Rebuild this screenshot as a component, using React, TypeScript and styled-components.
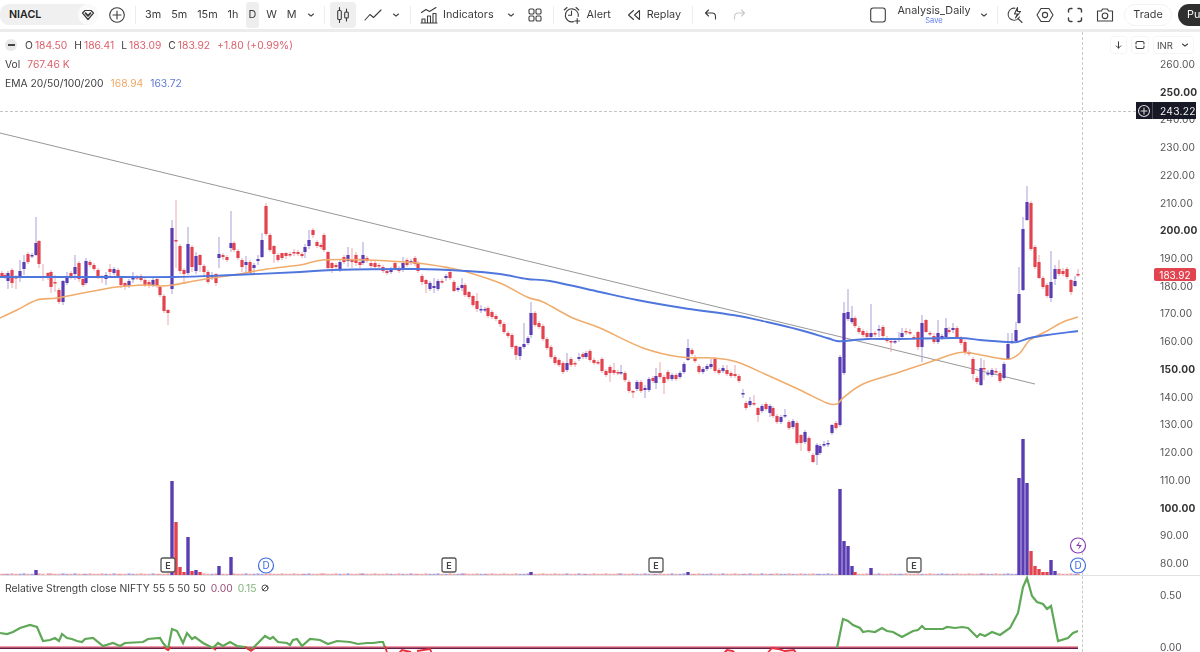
import React from 'react';
import styled, { createGlobalStyle } from 'styled-components';

const GlobalStyle = createGlobalStyle`
  html, body {
    margin: 0;
    padding: 0;
    background: #fff;
    overflow: hidden;
  }
  body {
    font-family: Inter, "Liberation Sans", sans-serif;
    color: #3a3a3a;
  }
`;

const Page = styled.div`
  width: 1200px;
  height: 652px;
  display: flex;
  flex-direction: column;
  overflow: hidden;
  filter: blur(0.4px);
`;

const Toolbar = styled.header`
  height: 29px;
  flex: none;
  display: flex;
  align-items: center;
  border-bottom: 3px solid #ececec;
  overflow: hidden;
  font-size: 10.8px;
`;

const SymbolPill = styled.div`
  width: 98px;
  height: 21px;
  flex: none;
  display: flex;
  align-items: center;
  justify-content: space-between;
  padding-left: 9px;
  box-sizing: border-box;
  border-radius: 10px 12px 12px 10px;
  background: #f0f0f0;
  font-size: 10.7px;
  font-weight: 600;
  color: #222;
`;

const DiamondBadge = styled.span`
  width: 20px;
  height: 21px;
  display: flex;
  align-items: center;
  justify-content: center;
  border-radius: 50%;
  background: #fafafa;
`;

const IconSlot = styled.span<{ $ml?: number; $w?: number }>`
  flex: none;
  width: ${p => p.$w ?? 18}px;
  height: 22px;
  margin-left: ${p => p.$ml ?? 0}px;
  display: flex;
  align-items: center;
  justify-content: center;
`;

const Divider = styled.span<{ $ml: number }>`
  flex: none;
  width: 1px;
  height: 18px;
  margin-left: ${p => p.$ml}px;
  background: #ededed;
`;

const Intervals = styled.div`
  display: flex;
  align-items: center;
  gap: 5px;
  margin-left: 6.5px;
`;

const IntervalBtn = styled.span<{ $active?: boolean }>`
  height: 26px;
  padding: 0 2.5px;
  display: flex;
  align-items: center;
  border-radius: 3px;
  background: ${p => (p.$active ? '#eeeeee' : 'transparent')};
`;

const ChartTypeBtn = styled.span`
  flex: none;
  width: 26px;
  height: 26px;
  margin-left: 5px;
  display: flex;
  align-items: center;
  justify-content: center;
  border-radius: 4px;
  background: #efefef;
`;

const BarLabel = styled.span<{ $ml: number }>`
  flex: none;
  margin-left: ${p => p.$ml}px;
`;

const RightGroup = styled.div`
  margin-left: auto;
  flex: none;
  display: flex;
  align-items: center;
`;

const LayoutName = styled.div`
  width: 74px;
  margin-left: 11px;
  padding-top: 1px;
  display: flex;
  flex-direction: column;
  align-items: center;
  line-height: 12px;
  font-size: 10.8px;
`;

const SaveHint = styled.span`
  font-size: 7.5px;
  line-height: 8px;
  color: #5f7fe8;
`;

const TradePill = styled.span`
  width: 48px;
  height: 22px;
  margin-left: 10px;
  display: flex;
  align-items: center;
  justify-content: center;
  box-sizing: border-box;
  border: 1px solid #f3f3f3;
  border-radius: 12px;
`;

const PublishPill = styled.span`
  width: 22px;
  height: 22px;
  margin-left: 6px;
  padding-left: 9px;
  box-sizing: border-box;
  display: flex;
  align-items: center;
  overflow: hidden;
  white-space: nowrap;
  border-radius: 12px 0 0 12px;
  background: #2f2f2f;
  color: #fff;
`;

const PriceRow = styled.section`
  position: relative;
  height: 543px;
  flex: none;
  display: flex;
  border-bottom: 1px solid #e2e2e2;
`;

const RsiRow = styled.section`
  position: relative;
  flex: 1;
  display: flex;
  min-height: 0;
`;

const ChartArea = styled.div`
  position: relative;
  width: 1082px;
  flex: none;
  border-right: 1px dashed #c9c9c9;
  svg {
    display: block;
    overflow: visible;
  }
`;

const Axis = styled.aside`
  flex: 1;
  display: flex;
  flex-direction: column;
  font-size: 10.2px;
  color: #4a4a4a;
`;

const AxisControls = styled.div`
  display: flex;
  align-items: center;
  gap: 4px;
  height: 18px;
  margin: 4px 0 -4px 27px;
`;

const AxisButton = styled.span<{ $w: number }>`
  width: ${p => p.$w}px;
  height: 18px;
  display: flex;
  align-items: center;
  justify-content: space-between;
  box-sizing: border-box;
  padding: 0 3px;
  border: 1px solid #f5f5f5;
  border-radius: 3px;
  font-size: 9.5px;
`;

const TickRow = styled.div<{ $strong?: boolean }>`
  height: 27.74px;
  flex: none;
  padding-left: 77px;
  display: flex;
  align-items: center;
  font-weight: ${p => (p.$strong ? 700 : 400)};
  color: ${p => (p.$strong ? '#333' : '#555')};
  letter-spacing: 0.15px;
`;

const RsiTicks = styled.div`
  height: 78px;
  padding: 14px 0 0 77px;
  box-sizing: border-box;
  display: flex;
  flex-direction: column;
  justify-content: space-between;
  line-height: 10px;
  color: #555;
`;

const Legend = styled.div`
  position: absolute;
  left: 5px;
  top: 4px;
  display: flex;
  flex-direction: column;
  font-size: 10.3px;
  color: #3f3f3f;
`;

const LegendRow = styled.div<{ $gap?: number }>`
  height: 18.8px;
  display: flex;
  align-items: center;
  gap: ${p => p.$gap ?? 7}px;
  white-space: nowrap;
`;

const CollapseBtn = styled.span`
  width: 12px;
  height: 12px;
  margin-right: 1px;
  border-radius: 50%;
  background: #e9e9e9;
  display: flex;
  align-items: center;
  justify-content: center;
  &::after {
    content: '';
    width: 7px;
    height: 2px;
    background: #444;
  }
`;

const Ohlc = styled.span`
  display: inline-flex;
  gap: 2px;
`;

const Val = styled.span<{ $c: string }>`
  color: ${p => p.$c};
`;

const RsiLegend = styled(Legend)`
  top: 4px;
  height: 16px;
`;

const CrossLine = styled.div`
  position: absolute;
  left: 0;
  right: 64px;
  top: 79px;
  border-top: 1px dashed #c4c4c4;
`;

const CrossTag = styled.div`
  position: absolute;
  left: 1136px;
  top: 70px;
  width: 60px;
  height: 17px;
  display: flex;
  align-items: center;
  background: #171a26;
  color: #f2f2f2;
  font-size: 10.2px;
  letter-spacing: 0.3px;
`;

const CrossPlus = styled.span`
  width: 16px;
  height: 17px;
  flex: none;
  display: flex;
  align-items: center;
  justify-content: center;
  border-right: 1px solid #4a4d58;
`;

const CrossPrice = styled.span`
  padding-left: 7px;
`;

const LastPriceTag = styled.div`
  position: absolute;
  left: 1154px;
  top: 236px;
  width: 42px;
  height: 13px;
  display: flex;
  align-items: center;
  justify-content: center;
  background: #e2444f;
  color: #fff;
  font-size: 10px;
  border-radius: 2px;
`;

const UP = '#5a3db3';
const DOWN = '#e2434f';
const UP_WICK = '#a99fd8';
const DOWN_WICK = '#eba9ae';

// c x top bottom wickTop wickBottom (page pixels)
const CANDLE_DATA = `r2 273 276|r5 275 277|p8 273 281 271 289|r12 270 283 268 288|r16 277 278 275 289|p20 271 277 260 282|p24 262 269 255 275|r28 254 262|p32 255 256|p36 243 255 217 256|r39 241 264 240 268|r43 276 277 264 281|r48 273 277 272 280|r51 272 287 270 293|r55 282 283 275 292|r59 290 302 288 304|p63 281 302 280 305|p67 278 283 272 285|r71 273 277 271 279|p75 267 274 255 280|r79 263 279 261 282|r83 279 285 278 287|p86 261 283 258 285|r90 262 265|r94 265 269|r98 270 277|r102 276 278 275 283|p106 275 279 272 285|r110 269 272 264 276|p114 269 273|r118 270 276|r121 277 285 276 288|r125 283 286 282 290|p129 281 286|p133 278 279 272 283|r137 277 278|r141 276 280|r145 280 285|r149 282 285 280 288|p153 280 285|r157 279 286|r160 287 295|r164 296 311|r168 310 313 309 325|p172 228 289 220 294|r176 240 241 200 268|r180 246 271 244 274|r184 270 274 268 284|p188 244 273 227 275|r192 247 267 245 272|p196 256 271 252 274|r200 255 265 254 272|r204 266 272 264 276|r208 272 282|p212 276 277 272 280|r216 274 283 273 286|p219 254 258 237 268|r223 255 257 253 260|r227 257 260|p231 243 248 211 252|r234 243 250|r238 251 258|r242 260 267 258 272|p246 262 265 256 275|r250 262 273 260 275|p254 265 268 263 274|p258 259 261 255 265|p262 240 257 233 258|r266 206 234 203 236|r270 235 250|r274 246 254 245 263|r278 255 260|r282 253 258 253 260|r286 253 256 252 259|r290 254 255|r294 252 253 249 256|r298 252 254|r302 254 256|p305 247 252 244 258|p309 240 246 230 249|r313 230 235 228 238|r317 242 246|r321 245 247|r324 235 250|r328 252 268 251 270|r332 263 268 262 273|r336 265 267|p340 262 270|r344 257 262 255 264|p348 255 261 247 267|r352 260 262 248 268|r356 255 263 252 266|r360 262 265 258 268|p363 255 263 242 265|r367 258 261 256 263|r371 263 266|r375 263 267|r379 265 266|r383 267 271|r387 271 273|p391 269 272|r395 263 268|r399 268 271|p403 263 270 257 272|r407 260 265 258 267|p411 261 263|r415 258 264 256 266|r418 263 271|r422 276 282 274 285|r426 280 284 279 293|p430 283 289|p434 286 288 278 293|p438 281 289|r442 281 282|p446 276 278 274 281|r450 272 278 270 280|r454 282 291 280 292|p458 288 290|p462 285 288 278 291|r465 285 295|r469 292 297 291 299|r473 296 305 295 307|r477 301 309 293 312|p481 309 310 305 313|p485 309 310 307 312|r488 308 316 306 318|r492 312 317|r496 316 319|r500 320 324 319 327|r504 324 332|r508 333 336|r512 335 347|r516 346 355 345 360|p520 347 356 346 360|p524 344 347 323 349|p528 338 343|p531 313 335 302 338|r535 313 325|r539 323 327|r543 326 339|r547 339 348|r551 347 357|r555 357 363|r559 360 365|r563 363 372|p567 363 370 353 372|r571 359 365|r575 363 364 361 367|p579 357 359 353 361|r583 354 357|p586 353 357|r590 351 360|r594 360 363|r598 362 363|r602 359 371|r606 371 375|r610 367 373 365 382|r614 370 373 363 375|r618 372 373|p621 372 373 365 375|r625 373 380|r629 382 391|r633 391 392 390 398|p637 382 389|r641 382 391|p645 388 390 385 398|p649 379 390|r653 378 381|p656 376 383 368 389|r660 373 377 362 379|r664 377 383 375 394|r668 372 379|p672 375 379|r676 375 379|p680 373 377|p684 364 372|p688 348 360 339 361|r692 350 354|r695 357 361|r699 366 372|p703 369 372|p707 366 369|p711 364 367 359 369|r715 359 371|r719 370 373|p723 368 371 365 373|r727 370 374 365 376|r731 373 376|r735 374 376 365 378|r739 376 381|p743 393 394 389 398|r746 403 408|p750 401 405 397 407|r754 403 404 395 406|r758 408 415 407 422|p762 406 411|r766 404 409|p770 406 413 404 417|r773 408 416|r777 416 422|p781 417 422|p785 415 416 409 418|r789 422 428|p793 421 427|r797 423 443|r801 435 443 434 451|p805 432 442|r809 438 451|r813 455 462 453 463|p817 445 455 443 465|p820 446 453|p824 444 445 441 447|p828 443 444 440 447|p832 425 433 424 435|r836 423 428|p840 357 425|p844 313 373 302 375|p848 312 319 289 321|p852 318 322 306 324|r855 318 326 316 328|r859 328 332|r863 331 335|r867 333 337|p871 333 337 304 339|r875 333 334 331 337|p879 329 330 325 337|r883 327 336|r887 338 341|r891 341 342 338 352|p895 341 342 338 344|p899 338 339 332 342|p902 333 337 328 339|r906 331 332 328 335|r910 332 333 329 335|r914 337 338|r918 332 347 331 350|p922 323 347 315 362|r926 320 332 319 333|r930 333 334|r934 336 342 333 344|p938 333 342 320 344|p942 336 338|p946 328 337 318 338|r949 330 332 327 334|p953 328 330 323 333|r957 328 337|r961 338 343|r965 342 353|r969 352 354|r973 359 374 357 380|r977 378 382 376 384|p981 368 385 358 386|r984 368 369 360 380|p988 373 374 370 376|p992 370 375 368 377|r996 371 372 368 374|r1000 373 381 371 383|p1004 364 378|p1008 344 359 333 360|p1012 341 342 333 344|p1016 330 341 322 342|p1019 294 323 267 324|p1023 229 290 217 291|p1027 202 220 186 221|r1031 203 249|r1035 247 267|r1039 262 278 255 279|r1043 278 287|r1047 285 296|p1051 282 298 251 302|p1055 269 279 265 285|r1059 269 274 260 276|r1063 271 274 268 276|r1067 269 277|r1071 280 292 279 295|p1075 281 286 276 287|r1078 274 275 269 277`;

type Candle = { x: number; t: number; b: number; wt: number; wb: number; up: boolean };

const candles: Candle[] = CANDLE_DATA.split('|').map(s => {
  const n = s.slice(1).split(' ').map(Number);
  return { x: n[0], t: n[1], b: n[2], wt: n[3] ?? n[1] - 2, wb: n[4] ?? n[2] + 2, up: s[0] === 'p' };
});

// volume bars that stand out, [x, top y]
const BIG_VOLUME: Record<number, number> = {
  36: 570, 172: 481, 176: 522, 180: 567, 184: 572, 188: 537, 192: 571, 196: 570, 200: 572,
  219: 566, 231: 557, 531: 572, 688: 572, 840: 489, 844: 541, 848: 546, 852: 566, 855: 572,
  871: 568, 1019: 478, 1023: 439, 1027: 483, 1031: 551, 1035: 566, 1039: 569, 1043: 572,
  1047: 572, 1051: 560, 1055: 571,
};

const EMA_BLUE = '0,277 43,277 100,277 173,277 233,275 300,272 333,270 417,269 467,271 500,274 527,279 550,281 600,292 637,300 683,308 733,315 767,322 800,330 827,338 837,341 845,341 867,339 897,339 957,338 980,340 1007,342 1017,342 1030,338 1047,335 1078,331';
const EMA_ORANGE = '0,318 17,310 37,300 57,298 83,293 117,287 147,285 160,286 173,285 200,280 233,275 267,269 300,265 323,260 367,260 417,263 450,268 467,272 500,283 527,297 543,302 573,318 600,328 643,348 680,357 713,358 737,362 767,375 800,390 827,403 837,404 843,398 863,384 897,373 930,362 957,353 970,353 997,358 1010,359 1020,353 1030,340 1047,331 1063,322 1078,317';
const RSI_LEFT = '0,633 7,634 13,632 20,628 30,625 37,627 43,641 50,640 55,638 59,641 62,634 67,638 72,639 77,641 82,642 85,639 93,638 103,646 113,643 120,646 125,643 143,642 148,639 160,638 163,643 168,649 172,629 177,631 183,643 187,633 192,639 195,637 203,643 213,648 218,643 223,646 230,642 237,646 245,647 251,650 257,644 265,636 270,639 273,637 278,642 287,643 290,645 293,640 297,639 302,646 310,639 320,640 328,644 337,641 350,642 358,644 367,643 373,643 380,642 383,642 385,648';
const RSI_RIGHT = '837,648 843,619 848,621 853,625 860,628 863,632 868,631 875,632 882,628 887,631 893,632 902,637 913,631 918,630 922,626 925,629 943,629 947,627 955,628 962,627 968,628 977,637 980,634 985,636 992,632 1000,635 1010,628 1018,613 1023,587 1027,578 1032,596 1037,602 1043,604 1047,609 1051,606 1058,641 1068,638 1073,633 1078,631';
const RSI_BELOW = ['M163 647L168 650L171 647', 'M213 648L216 650', 'M245 647L251 651L255 648', 'M385 646L388 656', 'M396 656L402 650L411 652', 'M417 651L430 649L433 656', 'M721 656L727 650L733 651L737 656', 'M765 656L772 648L778 649L785 651L794 650L798 656'];

// catmull-rom through the read-off points, the averages are smooth curves
const smooth = (points: string) => {
  const p = points.split(' ').map(s => s.split(',').map(Number));
  let d = `M${p[0][0]} ${p[0][1]}`;
  for (let i = 0; i < p.length - 1; i++) {
    const a = p[Math.max(i - 1, 0)];
    const b = p[i];
    const c = p[i + 1];
    const e = p[Math.min(i + 2, p.length - 1)];
    const c1 = [b[0] + (c[0] - a[0]) / 6, b[1] + (c[1] - a[1]) / 6];
    const c2 = [c[0] - (e[0] - b[0]) / 6, c[1] - (e[1] - b[1]) / 6];
    d += `C${c1[0].toFixed(1)} ${c1[1].toFixed(1)} ${c2[0].toFixed(1)} ${c2[1].toFixed(1)} ${c[0]} ${c[1]}`;
  }
  return d;
};

const Ico = styled.svg<{ $s?: number; $stroke?: string }>`
  display: block;
  fill: none;
  stroke: ${p => p.$stroke ?? '#3c3c3c'};
  stroke-width: 1.1;
  stroke-linecap: round;
  stroke-linejoin: round;
  width: ${p => p.$s ?? 18}px;
  height: ${p => p.$s ?? 18}px;
`;

const Chevron = () => (
  <Ico viewBox="0 0 10 10" $s={10}>
    <path d="M2.5 4l2.5 2.2L7.5 4" />
  </Ico>
);

const EarningsMark = ({ x }: { x: number }) => (
  <g>
    <rect x={x - 7} y={558} width={14} height={14} rx={2} fill="#fff" stroke="#555" strokeWidth={1.3} />
    <text x={x} y={568.5} textAnchor="middle" fontSize={9} fontWeight={600} fill="#444" fontFamily="Inter, sans-serif">E</text>
  </g>
);

const DividendMark = ({ x }: { x: number }) => (
  <g>
    <circle cx={x} cy={565.5} r={7.5} fill="#fff" stroke="#3d6ee0" strokeWidth={1.2} />
    <text x={x} y={569.2} textAnchor="middle" fontSize={10} fill="#3d6ee0" fontFamily="Inter, sans-serif">D</text>
  </g>
);

const PriceChart = () => (
  <svg width={1082} height={543} viewBox="0 32 1082 543">
    <line x1={0} y1={133} x2={1035} y2={384} stroke="#8b8b8b" strokeWidth={0.9} />
    {candles.map(c => (
      <g key={c.x}>
        <line x1={c.x} x2={c.x} y1={c.wt} y2={c.wb} stroke={c.up ? UP_WICK : DOWN_WICK} strokeWidth={1} />
        <rect x={c.x - 1.6} y={c.t} width={3.2} height={Math.max(c.b - c.t, 1.5)} fill={c.up ? UP : DOWN} />
      </g>
    ))}
    <path d={smooth(EMA_ORANGE)} fill="none" stroke="#f0ac6c" strokeWidth={1.6} />
    <path d={smooth(EMA_BLUE)} fill="none" stroke="#4f76dd" strokeWidth={1.9} />
    {candles.map(c => {
      const top = BIG_VOLUME[c.x] ?? 574 - (c.x % 3 === 0 ? 0.6 : 0.2);
      const big = BIG_VOLUME[c.x] !== undefined;
      return (
        <rect
          key={c.x}
          x={c.x - 1.7}
          y={top}
          width={3.4}
          height={575 - top}
          fill={c.up ? UP : DOWN}
          opacity={big ? 1 : 0.5}
        />
      );
    })}
    {[168, 449, 656, 914].map(x => <EarningsMark key={x} x={x} />)}
    {[266, 1078].map(x => <DividendMark key={x} x={x} />)}
    <circle cx={1078} cy={545.5} r={7.5} fill="#fff" stroke="#8a3fb5" strokeWidth={1.2} />
    <path d="M1080 541l-4 5h3.5l-1.5 4 4-5h-3.5z" fill="#8a3fb5" />
  </svg>
);

const RsiChart = () => (
  <svg width={1082} height={76} viewBox="0 576 1082 76">
    <line x1={0} x2={1078} y1={647} y2={647} stroke="#ee3b52" strokeWidth={1} />
    <line x1={0} x2={1078} y1={648.2} y2={648.2} stroke="#6b1c48" strokeWidth={1.4} />
    <polyline points={RSI_LEFT} fill="none" stroke="#5fa857" strokeWidth={2.2} />
    <polyline points={RSI_RIGHT} fill="none" stroke="#5fa857" strokeWidth={2.2} />
    {RSI_BELOW.map(d => <path key={d} d={d} fill="none" stroke="#e8303f" strokeWidth={1.8} />)}
  </svg>
);

const PRICE_TICKS = [260, 250, 240, 230, 220, 210, 200, 190, 180, 170, 160, 150, 140, 130, 120, 110, 100, 90, 80];
const STRONG_TICKS = [250, 200, 150, 100];
const RED = '#dc5f6a';

export default function App() {
  return (
    <Page>
      <GlobalStyle />
      <Toolbar>
        <SymbolPill>
          NIACL
          <DiamondBadge>
            <Ico viewBox="0 0 14 14" $s={14}>
              <path d="M1.5 5L4 2.5h6L12.5 5 7 11.5z" strokeWidth={1.2} />
              <path d="M4.5 5.2L7 7.8l2.5-2.6" strokeWidth={1.8} />
            </Ico>
          </DiamondBadge>
        </SymbolPill>
        <IconSlot $ml={10}>
          <Ico viewBox="0 0 18 18">
            <circle cx={9} cy={9} r={7.3} />
            <path d="M9 5v8M5 9h8" />
          </Ico>
        </IconSlot>
        <Divider $ml={9} />
        <Intervals>
          <IntervalBtn>3m</IntervalBtn>
          <IntervalBtn>5m</IntervalBtn>
          <IntervalBtn>15m</IntervalBtn>
          <IntervalBtn>1h</IntervalBtn>
          <IntervalBtn $active>D</IntervalBtn>
          <IntervalBtn>W</IntervalBtn>
          <IntervalBtn>M</IntervalBtn>
        </Intervals>
        <IconSlot $ml={6} $w={12}><Chevron /></IconSlot>
        <Divider $ml={7} />
        <ChartTypeBtn>
          <Ico viewBox="0 0 18 18">
            <path d="M5.5 1.5v3M5.5 13.5v3M12.5 3v3M12.5 12v3" />
            <rect x={3.7} y={4.5} width={3.6} height={9} rx={1} />
            <rect x={10.7} y={6} width={3.6} height={6} rx={1} />
          </Ico>
        </ChartTypeBtn>
        <IconSlot $ml={8}>
          <Ico viewBox="0 0 18 18">
            <path d="M1 14l5-5.5 3.5 3L17 4" />
          </Ico>
        </IconSlot>
        <IconSlot $ml={8} $w={12}><Chevron /></IconSlot>
        <Divider $ml={8} />
        <IconSlot $ml={9}>
          <Ico viewBox="0 0 18 18">
            <path d="M1.5 6.5L6 3.5l3.5 2L16 1.5" />
            <path d="M2 17v-4h3v4zM7.5 17V10h3v7zM13 17V7.5h3V17zM1 17h16" />
          </Ico>
        </IconSlot>
        <BarLabel $ml={5}>Indicators</BarLabel>
        <IconSlot $ml={11} $w={12}><Chevron /></IconSlot>
        <IconSlot $ml={11} $w={14}>
          <Ico viewBox="0 0 14 14" $s={14}>
            <rect x={1} y={1} width={5} height={5} rx={1.3} />
            <rect x={8} y={1} width={5} height={5} rx={1.3} />
            <rect x={1} y={8} width={5} height={5} rx={1.3} />
            <rect x={8} y={8} width={5} height={5} rx={1.3} />
          </Ico>
        </IconSlot>
        <Divider $ml={11} />
        <IconSlot $ml={9}>
          <Ico viewBox="0 0 18 18">
            <path d="M10.5 15.6A6.5 6.5 0 1 1 15.2 10.5" />
            <path d="M8.5 5v4.3h-3M1.2 4L4 1.5M15.8 4L13 1.5M14.2 12.5v5M11.7 15h5" />
          </Ico>
        </IconSlot>
        <BarLabel $ml={6}>Alert</BarLabel>
        <IconSlot $ml={16} $w={14}>
          <Ico viewBox="0 0 14 14" $s={14}>
            <path d="M6.5 2.5L1.5 7l5 4.5M12.5 2.5L7.5 7l5 4.5z" />
          </Ico>
        </IconSlot>
        <BarLabel $ml={6}>Replay</BarLabel>
        <Divider $ml={11} />
        <IconSlot $ml={11} $w={13}>
          <Ico viewBox="0 0 13 13" $s={13}>
            <path d="M4.5 2L1.5 5l3 3M1.5 5H8a3.5 3.5 0 0 1 3.5 3.5V11" />
          </Ico>
        </IconSlot>
        <IconSlot $ml={16} $w={13}>
          <Ico viewBox="0 0 13 13" $s={13} $stroke="#c8c8c8">
            <path d="M8.5 2l3 3-3 3M11.5 5H5A3.5 3.5 0 0 0 1.5 8.5V11" />
          </Ico>
        </IconSlot>
        <RightGroup>
          <IconSlot $w={16}>
            <Ico viewBox="0 0 16 16" $s={16}>
              <rect x={0.7} y={1} width={14.6} height={14} rx={2.5} />
            </Ico>
          </IconSlot>
          <LayoutName>
            Analysis_Daily
            <SaveHint>Save</SaveHint>
          </LayoutName>
          <IconSlot $ml={7} $w={12}><Chevron /></IconSlot>
          <Divider $ml={7} />
          <IconSlot $ml={8} $w={18}>
            <Ico viewBox="0 0 18 18">
              <path d="M9 2.2A6 6 0 1 0 13.5 11" />
              <path d="M11.5 1.5L8.500 8h3L9.500 12l5-6.500h-3z" />
              <path d="M12 12.500l4 4" />
            </Ico>
          </IconSlot>
          <IconSlot $ml={12} $w={18}>
            <Ico viewBox="0 0 18 18">
              <path d="M5 2.500h8L17 9l-4 6.500H5L1 9z" />
              <circle cx={9} cy={9} r={2.600} />
            </Ico>
          </IconSlot>
          <IconSlot $ml={13} $w={16}>
            <Ico viewBox="0 0 16 16" $s={16}>
              <path d="M1.500 5V3.500a2 2 0 0 1 2-2H5M11 1.500h1.500a2 2 0 0 1 2 2V5M14.500 11v1.500a2 2 0 0 1-2 2H11M5 14.500H3.500a2 2 0 0 1-2-2V11" strokeWidth={1.4} />
            </Ico>
          </IconSlot>
          <IconSlot $ml={13} $w={18}>
            <Ico viewBox="0 0 18 18">
              <path d="M1.500 5h4l1-2h5l1 2h4v10h-15z" />
              <circle cx={9} cy={9.800} r={2.800} />
            </Ico>
          </IconSlot>
          <TradePill>Trade</TradePill>
          <PublishPill>Publish</PublishPill>
        </RightGroup>
      </Toolbar>

      <PriceRow>
        <ChartArea>
          <PriceChart />
          <Legend>
            <LegendRow>
              <CollapseBtn />
              <Ohlc>O<Val $c={RED}>184.50</Val></Ohlc>
              <Ohlc>H<Val $c={RED}>186.41</Val></Ohlc>
              <Ohlc>L<Val $c={RED}>183.09</Val></Ohlc>
              <Ohlc>C<Val $c={RED}>183.92</Val></Ohlc>
              <Val $c={RED}>+1.80 (+0.99%)</Val>
            </LegendRow>
            <LegendRow>
              Vol <Val $c={RED}>767.46 K</Val>
            </LegendRow>
            <LegendRow>
              EMA 20/50/100/200 <Val $c="#efa866">168.94</Val> <Val $c="#5f78d8">163.72</Val>
            </LegendRow>
          </Legend>
        </ChartArea>
        <Axis>
          <AxisControls>
            <AxisButton $w={17}>
              <Ico viewBox="0 0 10 10" $s={10}>
                <path d="M5 1.500v7M2.500 6L5 8.500 7.500 6" />
              </Ico>
            </AxisButton>
            <AxisButton $w={18}>
              <Ico viewBox="0 0 10 10" $s={10}>
                <path d="M1 4V3a1.500 1.500 0 0 1 1.500-1.500h5A1.500 1.500 0 0 1 9 3v1M1 6v1a1.500 1.500 0 0 0 1.500 1.500h5A1.500 1.500 0 0 0 9 7V6" />
              </Ico>
            </AxisButton>
            <AxisButton $w={41}>
              INR
              <Chevron />
            </AxisButton>
          </AxisControls>
          {PRICE_TICKS.map(t => (
            <TickRow key={t} $strong={STRONG_TICKS.includes(t)}>{t.toFixed(2)}</TickRow>
          ))}
        </Axis>
        <CrossLine />
        <CrossTag>
          <CrossPlus>
            <Ico viewBox="0 0 14 14" $s={14} $stroke="#d8d8d8">
              <circle cx={7} cy={7} r={5.500} />
              <path d="M7 4v6M4 7h6" />
            </Ico>
          </CrossPlus>
          <CrossPrice>243.22</CrossPrice>
        </CrossTag>
        <LastPriceTag>183.92</LastPriceTag>
      </PriceRow>

      <RsiRow>
        <ChartArea>
          <RsiChart />
          <RsiLegend>
            <LegendRow $gap={5}>
              Relative Strength close NIFTY 55 5 50 50
              <Val $c="#9c4f78">0.00</Val>
              <Val $c="#7fb57a">0.15</Val>
              <Ico viewBox="0 0 10 10" $s={8}>
                <circle cx={5} cy={5} r={3.800} />
                <path d="M2.500 7.500l5-5" />
              </Ico>
            </LegendRow>
          </RsiLegend>
        </ChartArea>
        <Axis>
          <RsiTicks>
            <span>0.50</span>
            <span>0.00</span>
          </RsiTicks>
        </Axis>
      </RsiRow>
    </Page>
  );
}
